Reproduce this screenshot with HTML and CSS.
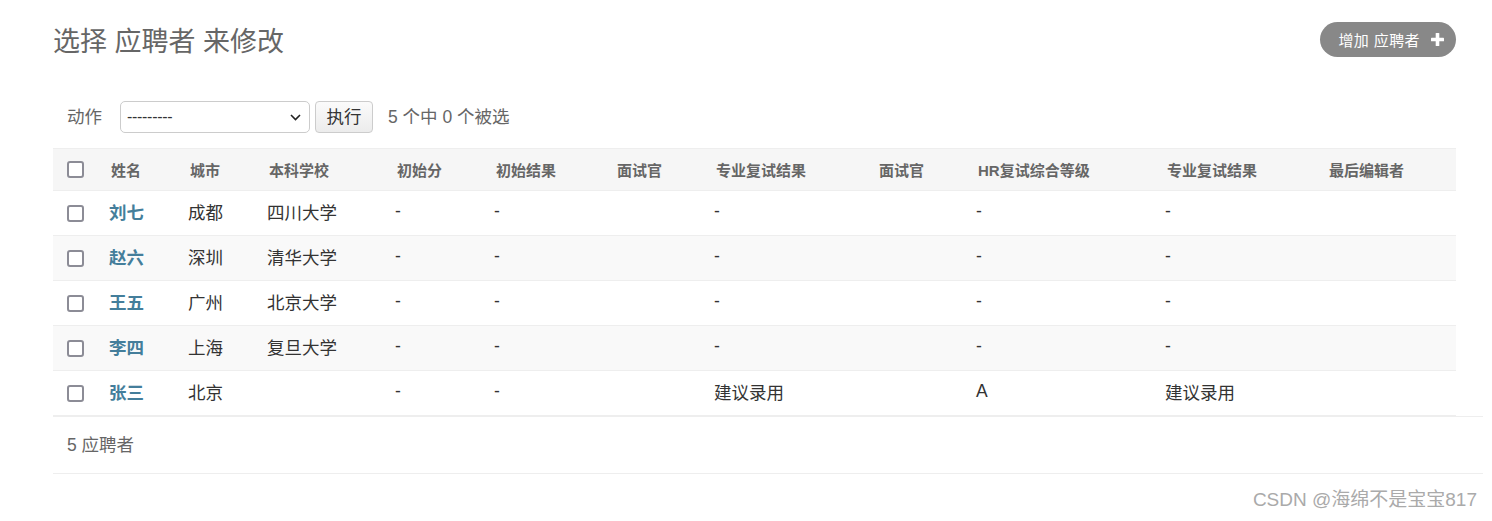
FILE: index.html
```html
<!DOCTYPE html>
<html lang="zh-CN">
<head>
<meta charset="utf-8">
<title>选择 应聘者 来修改</title>
<link rel="stylesheet" href="styles.css">
</head>
<body>
<div class="content">
  <div class="page-head">
    <h1 class="title">选择 应聘者 来修改</h1>
    <a class="addlink" href="#">增加 应聘者<svg class="plus" width="13" height="13" viewBox="0 0 13 13"><rect x="4.7" y="0" width="3.6" height="13" rx="0.6" fill="#fff"/><rect x="0" y="4.7" width="13" height="3.6" rx="0.6" fill="#fff"/></svg></a>
  </div>

  <div class="actions">
    <span class="act-label">动作</span>
    <div class="select"><span class="select-text">---------</span><svg class="chev" width="11" height="7" viewBox="0 0 11 7"><path d="M1 1l4.5 4.5L10 1" fill="none" stroke="#222" stroke-width="1.6"/></svg></div>
    <button class="go" type="button">执行</button>
    <span class="counter">5 个中 0 个被选</span>
  </div>

  <table class="results">
    <colgroup>
      <col class="c-cb"><col class="c-name"><col class="c-city"><col class="c-school"><col class="c-score"><col class="c-res"><col class="c-int"><col class="c-pro"><col class="c-int2"><col class="c-hr"><col class="c-pro2"><col class="c-editor">
    </colgroup>
    <thead>
      <tr>
        <th class="cb"><span class="box"></span></th>
        <th>姓名</th><th>城市</th><th>本科学校</th><th>初始分</th><th>初始结果</th><th>面试官</th><th>专业复试结果</th><th>面试官</th><th>HR复试综合等级</th><th>专业复试结果</th><th>最后编辑者</th>
      </tr>
    </thead>
    <tbody>
      <tr>
        <td class="cb"><span class="box"></span></td>
        <td><a class="name" href="#">刘七</a></td><td>成都</td><td>四川大学</td><td>-</td><td>-</td><td></td><td>-</td><td></td><td>-</td><td>-</td><td></td>
      </tr>
      <tr class="alt">
        <td class="cb"><span class="box"></span></td>
        <td><a class="name" href="#">赵六</a></td><td>深圳</td><td>清华大学</td><td>-</td><td>-</td><td></td><td>-</td><td></td><td>-</td><td>-</td><td></td>
      </tr>
      <tr>
        <td class="cb"><span class="box"></span></td>
        <td><a class="name" href="#">王五</a></td><td>广州</td><td>北京大学</td><td>-</td><td>-</td><td></td><td>-</td><td></td><td>-</td><td>-</td><td></td>
      </tr>
      <tr class="alt">
        <td class="cb"><span class="box"></span></td>
        <td><a class="name" href="#">李四</a></td><td>上海</td><td>复旦大学</td><td>-</td><td>-</td><td></td><td>-</td><td></td><td>-</td><td>-</td><td></td>
      </tr>
      <tr>
        <td class="cb"><span class="box"></span></td>
        <td><a class="name" href="#">张三</a></td><td>北京</td><td></td><td>-</td><td>-</td><td></td><td>建议录用</td><td></td><td>A</td><td>建议录用</td><td></td>
      </tr>
    </tbody>
  </table>

  <p class="paginator">5 应聘者</p>
</div>
<div class="watermark">CSDN @海绵不是宝宝817</div>
</body>
</html>
```

FILE: styles.css
```css
* { box-sizing: border-box; }

html, body {
  margin: 0;
  padding: 0;
  background: #fff;
}

body {
  font-family: "Liberation Sans", "Noto Sans CJK SC", sans-serif;
  color: #333;
  width: 1492px;
  height: 521px;
  position: relative;
  overflow: hidden;
}

.content {
  margin-left: 53px;
  width: 1430px;
}

.page-head {
  display: flex;
  justify-content: space-between;
  align-items: flex-start;
  margin-top: 22px;
  margin-right: 27px;
  height: 35px;
}

.title {
  margin: 2px 0 0 0;
  font-size: 27px;
  line-height: 36px;
  font-weight: normal;
  color: #666;
}

.addlink {
  display: flex;
  align-items: center;
  height: 35px;
  padding: 0 12px 0 18px;
  border-radius: 18px;
  background: #888;
  color: #fff;
  font-size: 15px;
  letter-spacing: 0.4px;
  text-decoration: none;
}

.plus {
  margin-left: 11px;
  display: block;
}

.actions {
  display: flex;
  align-items: center;
  height: 32px;
  margin-top: 44px;
  padding-left: 14px;
  font-size: 17.5px;
}

.act-label {
  color: #666;
  width: 35px;
  margin-right: 18px;
  line-height: 32px;
}

.select {
  display: flex;
  align-items: center;
  justify-content: space-between;
  width: 190px;
  height: 32px;
  border: 1px solid #ccc;
  border-radius: 5px;
  padding: 0 8px 0 6px;
  background: #fff;
  color: #333;
  font-size: 16px;
}

.select-text {
  line-height: 30px;
  letter-spacing: -0.3px;
}

.chev { display: block; }

.go {
  margin-left: 5px;
  width: 58px;
  height: 32px;
  padding: 0;
  border: 1px solid #ccc;
  border-radius: 4px;
  background: linear-gradient(#fbfbfb, #ececec);
  color: #333;
  font-family: inherit;
  font-size: 17.5px;
  line-height: 30px;
}

.counter {
  margin-left: 15px;
  color: #666;
  line-height: 32px;
}

.results {
  margin-top: 15px;
  width: 1403px;
  table-layout: fixed;
  border-collapse: collapse;
}

.c-cb { width: 42px; }
.c-name { width: 79px; }
.c-city { width: 79px; }
.c-school { width: 128px; }
.c-score { width: 99px; }
.c-res { width: 121px; }
.c-int { width: 99px; }
.c-pro { width: 163px; }
.c-int2 { width: 99px; }
.c-hr { width: 189px; }
.c-pro2 { width: 162px; }
.c-editor { width: 143px; }

.results th {
  height: 42px;
  padding: 0 0 1px 16px;
  text-align: left;
  font-size: 15px;
  font-weight: bold;
  color: #666;
  background: #f6f6f6;
  border-top: 1px solid #eee;
  border-bottom: 1px solid #eee;
  white-space: nowrap;
  vertical-align: middle;
}

.results td {
  height: 45px;
  padding: 0 0 3px 14px;
  font-size: 17.5px;
  color: #333;
  border-bottom: 1px solid #eee;
  vertical-align: middle;
  white-space: nowrap;
}

.results tr.alt td { background: #f9f9f9; }

.results th.cb,
.results td.cb {
  padding: 0 0 0 14px;
}

.box {
  display: block;
  width: 17px;
  height: 17px;
  border: 2px solid #8c8c96;
  border-radius: 3px;
  background: #fff;
}

.name {
  color: #447e9b;
  font-weight: bold;
  text-decoration: none;
}

.paginator {
  margin: 0;
  height: 58px;
  padding-left: 14px;
  border-top: 1px solid #eee;
  border-bottom: 1px solid #eee;
  font-size: 17.5px;
  line-height: 56px;
  color: #666;
}

.watermark {
  position: absolute;
  right: 15px;
  top: 488px;
  font-size: 19px;
  line-height: 24px;
  color: #aaa;
}
```
